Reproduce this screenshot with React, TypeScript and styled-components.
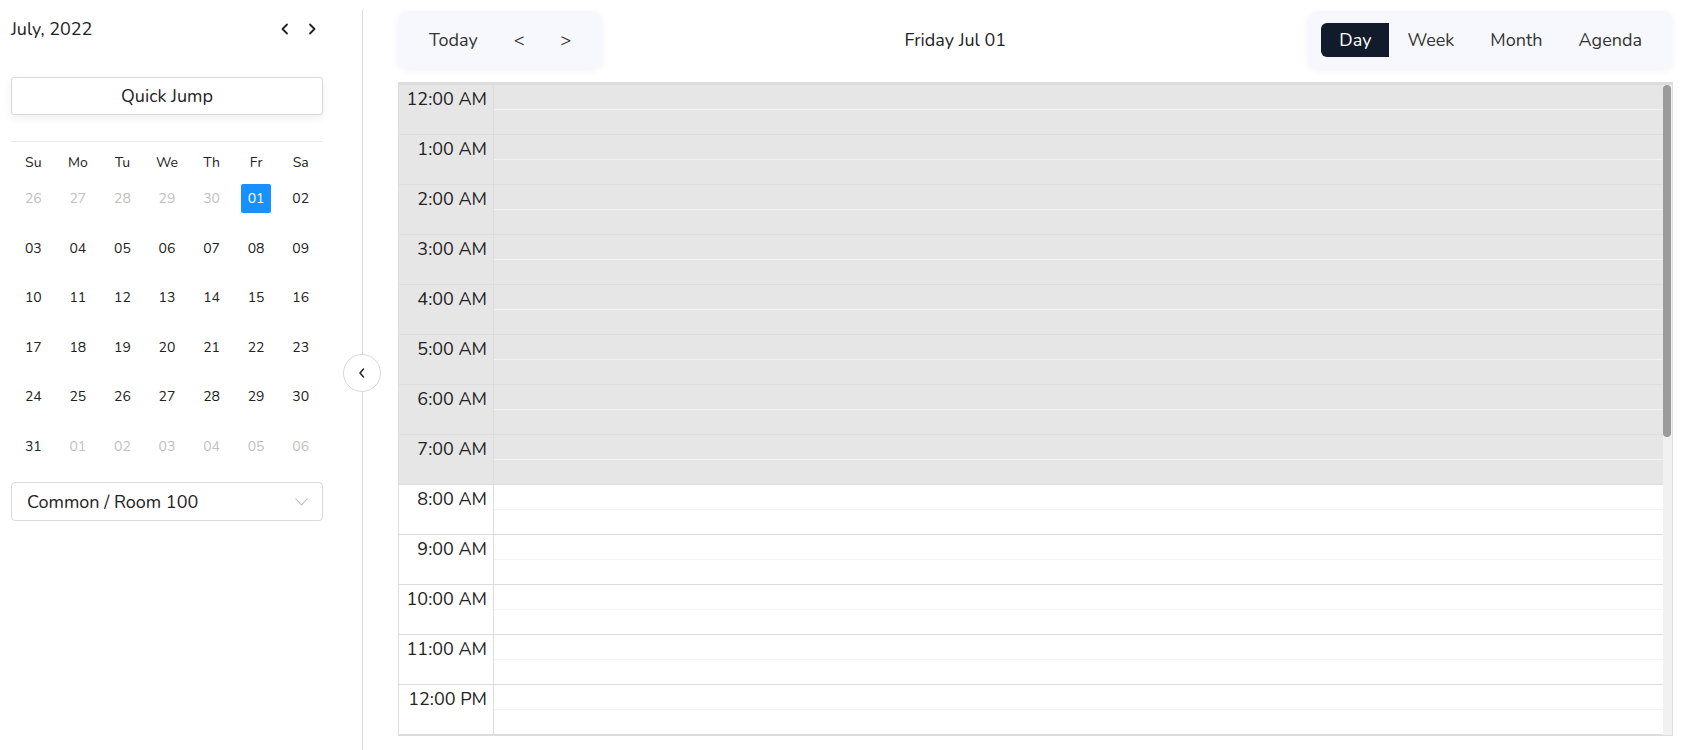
import styled, { createGlobalStyle } from "styled-components";

const GlobalStyle = createGlobalStyle`
  * { box-sizing: border-box; }
  body {
    margin: 0;
    font-family: "Nunito", "Noto Sans", "Open Sans", sans-serif;
    color: #222;
    background: #fff;
  }
`;

const Page = styled.div`
  display: flex;
  height: 750px;
  overflow: hidden;
`;

const Sidebar = styled.aside`
  width: 362px;
  flex-shrink: 0;
  padding: 16px 39px 0 11px;
`;

const MonthHeader = styled.div`
  display: flex;
  align-items: center;
  justify-content: space-between;
  height: 26px;
`;

const MonthTitle = styled.div`
  font-size: 18px;
  color: #222;
`;

const ArrowGroup = styled.div`
  display: flex;
  gap: 17px;
  padding-right: 6px;
`;

const ArrowBtn = styled.button`
  border: none;
  background: none;
  padding: 0;
  display: flex;
  cursor: pointer;
  color: #222;
`;

const QuickJump = styled.button`
  margin-top: 35px;
  width: 100%;
  height: 38px;
  background: #fff;
  border: 1px solid #d9d9d9;
  border-radius: 3px;
  box-shadow: 0 3px 10px rgba(0, 0, 0, 0.07);
  font-family: inherit;
  font-size: 18px;
  color: #222;
  cursor: pointer;
`;

const MiniCal = styled.div`
  margin-top: 26px;
  border-top: 1px solid #ececec;
`;

const WeekRow = styled.div`
  display: grid;
  grid-template-columns: repeat(7, 1fr);
  margin-top: 8px;
  height: 24px;
  align-items: center;
  text-align: center;
  font-size: 14px;
  color: #222;
`;

const DaysGrid = styled.div`
  display: grid;
  grid-template-columns: repeat(7, 1fr);
  grid-auto-rows: 49.5px;
`;

const DayCell = styled.div`
  display: flex;
  align-items: center;
  justify-content: center;
`;

const DayNum = styled.span<{ $muted?: boolean; $selected?: boolean }>`
  width: 30px;
  height: 29px;
  display: flex;
  align-items: center;
  justify-content: center;
  font-size: 14px;
  border-radius: 2px;
  color: ${(p) => (p.$selected ? "#fff" : p.$muted ? "#bfbfbf" : "#222")};
  background: ${(p) => (p.$selected ? "#1890ff" : "transparent")};
`;

const RoomSelect = styled.div`
  margin-top: 11px;
  height: 39px;
  border: 1px solid #d9d9d9;
  border-radius: 4px;
  display: flex;
  align-items: center;
  justify-content: space-between;
  padding: 0 14px 0 15px;
  font-size: 18px;
  color: #222;
`;

const Divider = styled.div`
  width: 1px;
  flex-shrink: 0;
  margin-top: 10px;
  background: #ddd;
  position: relative;
`;

const CollapseBtn = styled.button`
  position: absolute;
  left: -19px;
  top: 344px;
  width: 38px;
  height: 38px;
  border-radius: 50%;
  border: 1px solid #d9d9d9;
  background: #fff;
  display: flex;
  align-items: center;
  justify-content: center;
  padding: 0;
  color: #222;
  cursor: pointer;
`;

const Main = styled.main`
  flex: 1;
  min-width: 0;
  padding: 11px 20px 0 35px;
  display: flex;
  flex-direction: column;
`;

const Toolbar = styled.div`
  display: flex;
  align-items: center;
  height: 58px;
`;

const BtnGroup = styled.div`
  display: flex;
  align-items: center;
  height: 58px;
  padding: 0 13px;
  background: #f7f8fd;
  border-radius: 10px;
  box-shadow: 0 2px 8px rgba(0, 0, 0, 0.05);
`;

const ToolBtn = styled.button<{ $active?: boolean }>`
  height: 34px;
  padding: 0 18px;
  border: none;
  border-radius: ${(p) => (p.$active ? "6px 0 0 6px" : "0")};
  background: ${(p) => (p.$active ? "#111b2b" : "transparent")};
  color: ${(p) => (p.$active ? "#fff" : "#333")};
  font-family: inherit;
  font-size: 18px;
  cursor: pointer;
`;

const DateLabel = styled.div`
  flex: 1;
  text-align: center;
  font-size: 18px;
  color: #222;
`;

const TimeGrid = styled.div`
  margin-top: 13px;
  display: flex;
  border: 1px solid #ddd;
  border-top: 3px solid #ddd;
`;

const Body = styled.div`
  flex: 1;
  height: 650px;
  overflow: hidden;
`;

const ScrollTrack = styled.div`
  width: 9px;
  flex-shrink: 0;
  background: #f1f1f1;
  padding: 0 1px 0 0;
`;

const ScrollThumb = styled.div`
  height: 352px;
  background: #9b9b9b;
  border-radius: 5px;
`;

const HourRow = styled.div<{ $off?: boolean }>`
  display: grid;
  grid-template-columns: 95px 1fr;
  height: 50px;
  border-bottom: 1px solid #ddd;
  background: ${(p) => (p.$off ? "#e6e6e6" : "#fff")};
`;

const Gutter = styled.div`
  border-right: 1px solid #ddd;
  text-align: right;
  padding: 2px 6px 0 0;
  font-size: 18px;
  color: #222;
`;

const Slots = styled.div`
  display: grid;
  grid-template-rows: 1fr 1fr;
`;

const HalfSlot = styled.div<{ $off?: boolean }>`
  border-bottom: 1px solid ${(p) => (p.$off ? "#f3f3f3" : "#f4f4f4")};
`;

const weekdays = ["Su", "Mo", "Tu", "We", "Th", "Fr", "Sa"];

const days: { n: string; muted?: boolean; selected?: boolean }[] = [
  ...["26", "27", "28", "29", "30"].map((n) => ({ n, muted: true })),
  ...Array.from({ length: 31 }, (_, i) => ({
    n: String(i + 1).padStart(2, "0"),
    selected: i === 0,
  })),
  ...["01", "02", "03", "04", "05", "06"].map((n) => ({ n, muted: true })),
];

// only the hours that fit in the visible part of the scroll area
const hours = Array.from({ length: 13 }, (_, i) => {
  const h = i % 12 === 0 ? 12 : i % 12;
  return `${h}:00 ${i < 12 ? "AM" : "PM"}`;
});

function Chevron({ dir }: { dir: "left" | "right" }) {
  return (
    <svg width="10" height="12" viewBox="0 0 10 12" fill="none">
      <polyline
        points={dir === "left" ? "7,1.5 2.5,6 7,10.5" : "3,1.5 7.5,6 3,10.5"}
        stroke="currentColor"
        strokeWidth="1.8"
        strokeLinecap="round"
        strokeLinejoin="round"
      />
    </svg>
  );
}

export default function App() {
  return (
    <Page>
      <GlobalStyle />
      <Sidebar>
        <MonthHeader>
          <MonthTitle>July, 2022</MonthTitle>
          <ArrowGroup>
            <ArrowBtn>
              <Chevron dir="left" />
            </ArrowBtn>
            <ArrowBtn>
              <Chevron dir="right" />
            </ArrowBtn>
          </ArrowGroup>
        </MonthHeader>
        <QuickJump>Quick Jump</QuickJump>
        <MiniCal>
          <WeekRow>
            {weekdays.map((d) => (
              <div key={d}>{d}</div>
            ))}
          </WeekRow>
          <DaysGrid>
            {days.map((d, i) => (
              <DayCell key={i}>
                <DayNum $muted={d.muted} $selected={d.selected}>
                  {d.n}
                </DayNum>
              </DayCell>
            ))}
          </DaysGrid>
        </MiniCal>
        <RoomSelect>
          <span>Common / Room 100</span>
          <svg width="13" height="8" viewBox="0 0 13 8" fill="none">
            <polyline points="0.5,0.5 6.5,7 12.5,0.5" stroke="#bbb" strokeWidth="1.1" />
          </svg>
        </RoomSelect>
      </Sidebar>
      <Divider>
        <CollapseBtn>
          <svg width="8" height="10" viewBox="0 0 8 10" fill="none">
            <polyline points="5.5,1 2,5 5.5,9" stroke="currentColor" strokeWidth="1.5" strokeLinecap="round" strokeLinejoin="round" />
          </svg>
        </CollapseBtn>
      </Divider>
      <Main>
        <Toolbar>
          <BtnGroup>
            <ToolBtn>Today</ToolBtn>
            <ToolBtn>&lt;</ToolBtn>
            <ToolBtn>&gt;</ToolBtn>
          </BtnGroup>
          <DateLabel>Friday Jul 01</DateLabel>
          <BtnGroup>
            <ToolBtn $active>Day</ToolBtn>
            <ToolBtn>Week</ToolBtn>
            <ToolBtn>Month</ToolBtn>
            <ToolBtn>Agenda</ToolBtn>
          </BtnGroup>
        </Toolbar>
        <TimeGrid>
          <Body>
            {hours.map((label, i) => {
              const off = i < 8;
              return (
                <HourRow key={label} $off={off}>
                  <Gutter>{label}</Gutter>
                  <Slots>
                    <HalfSlot $off={off} />
                    <div />
                  </Slots>
                </HourRow>
              );
            })}
          </Body>
          <ScrollTrack>
            <ScrollThumb />
          </ScrollTrack>
        </TimeGrid>
      </Main>
    </Page>
  );
}
